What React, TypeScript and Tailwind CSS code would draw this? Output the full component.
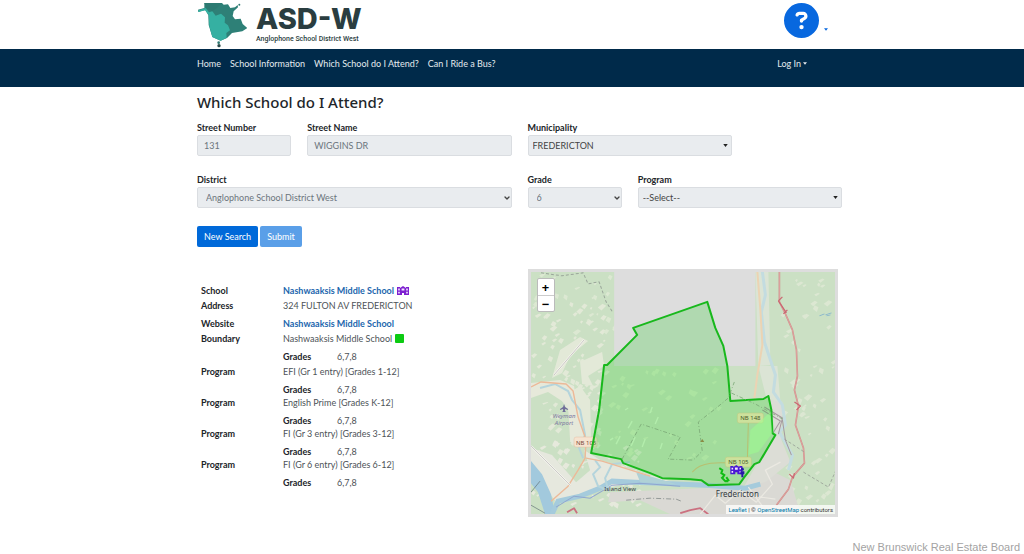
import React from "react";
import { FaCircleQuestion } from "react-icons/fa6";
import { ChevronDown } from "lucide-react";

const navLinks = [
  "Home",
  "School Information",
  "Which School do I Attend?",
  "Can I Ride a Bus?",
];

const programs = [
  "EFI (Gr 1 entry) [Grades 1-12]",
  "English Prime [Grades K-12]",
  "FI (Gr 3 entry) [Grades 3-12]",
  "FI (Gr 6 entry) [Grades 6-12]",
];

const fieldClass =
  "block h-[21px] w-full appearance-none rounded-[2px] border border-[#dadde1] bg-[#e9ecef] text-[9px] leading-[18px]";

// Outline of the school catchment area
const boundary =
  "M707 302 L633 328 L637 335 L607 365 L604 365 L599 410 L591 453 L621 459 L623 463 L650 473 L662 478 L690 479 L701 480 L708 485 L739 484 L744 477 L754 464 L759 462 L775 435 L772 433 L771 410 L768 396 L763 399 L730 401 L727 366 L723 346 L715 328 Z";

const highway =
  "M779 272 L779 302 L785 314 L792 330 L796 350 L797 376 L794 390 L798 406 L795 425 L803 448 L804 463 L792 477 L788 489 L776 505";

function Logo() {
  return (
    <svg viewBox="50 0 150 144" className="h-[48px] w-[50px]" aria-hidden="true">
      <path
        d="M72 9 L125 9 L130 14 L143 13 L150 24 L164 22 L172 15 L173 22 L160 34 L157 48 L164 58 L181 56 L187 72 L201 84 L186 94 L155 99 L140 114 L121 122 L96 111 L85 75 L84 46 L75 30 L54 36 L53 29 L72 24 Z"
        fill="#2e8077"
      />
      <path
        d="M54 31 L76 24 L86 37 L96 34 L106 47 L122 41 L134 52 L133 68 L143 76 L149 91 L138 99 L139 113 L121 122 L96 111 L87 78 L85 45 L74 31 L54 36 Z"
        fill="#35b0a2"
      />
      <path d="M72 9 L78 24 L96 34 L112 22 L125 9 Z" fill="#2c7a72" />
      <circle cx="115" cy="128" r="4" fill="#2c7770" />
      <circle cx="116" cy="137" r="5" fill="#2a4a4a" />
      <circle cx="177" cy="14" r="3" fill="#2c7770" />
    </svg>
  );
}

function SchoolShape() {
  return (
    <>
      <path d="M0 1 H3 V2 L6 0 L9 2 V1 H12 V9 H7 V7 H5 V9 H0 Z" fill="currentColor" />
      <path
        d="M1.2 2.6 h1.6 v1.8 h-1.6 z M1.2 5.8 h1.6 v1.8 h-1.6 z M9.2 2.6 h1.6 v1.8 h-1.6 z M9.2 5.8 h1.6 v1.8 h-1.6 z M4.6 2.4 h2.8 v2.2 h-2.8 z"
        fill="#f3e9ff"
      />
    </>
  );
}

function Caret({ className }: { className: string }) {
  return (
    <svg viewBox="0 0 6 4" className={className} aria-hidden="true">
      <path d="M0 0 H6 L3 4 Z" fill="currentColor" />
    </svg>
  );
}

interface SelectFieldProps {
  id: string;
  label: string;
  value: string;
  className: string;
  plain?: boolean;
}

function SelectField({ id, label, value, className, plain }: SelectFieldProps) {
  return (
    <div className={className}>
      <label htmlFor={id} className="block font-bold leading-[14px] text-[#212529]">
        {label}
      </label>
      <div className="relative">
        <select
          id={id}
          disabled={!plain}
          defaultValue={value}
          className={`${fieldClass} ${
            plain ? "px-1 text-[#444444]" : "px-2 text-[#6c757d] opacity-100"
          }`}
        >
          <option>{value}</option>
        </select>
        {plain ? (
          <Caret className="pointer-events-none absolute right-1 top-[9px] h-[3px] w-[5px] text-[#222222]" />
        ) : (
          <ChevronDown
            size={8}
            strokeWidth={4}
            className="pointer-events-none absolute right-px top-[7px] text-[#444444]"
          />
        )}
      </div>
    </div>
  );
}

interface TextFieldProps {
  id: string;
  label: string;
  value: string;
  className: string;
}

function TextField({ id, label, value, className }: TextFieldProps) {
  return (
    <div className={className}>
      <label htmlFor={id} className="block font-bold leading-[14px] text-[#212529]">
        {label}
      </label>
      <input
        id={id}
        type="text"
        readOnly
        defaultValue={value}
        className={`${fieldClass} px-[6px] text-[#6c757d]`}
      />
    </div>
  );
}

// Small clearings scattered over the woodland, same layout on every render
function scatter(count: number, seed: number, x: number, y: number, w: number, h: number) {
  let s = seed;
  const next = () => {
    s = (s * 16807) % 2147483647;
    return s / 2147483647;
  };
  let d = "";
  for (let i = 0; i < count; i++) {
    const px = x + next() * w;
    const py = y + next() * h;
    const a = 1 + next() * 4;
    const b = 1 + next() * 3;
    d += `M${px.toFixed(1)} ${py.toFixed(1)}l${a.toFixed(1)} ${(-b).toFixed(1)}l${b.toFixed(1)} ${(b / 2).toFixed(1)}l${(-a).toFixed(1)} ${(b + 1).toFixed(1)}z`;
  }
  return d;
}

function AreaMap() {
  return (
    <svg
      viewBox="531 272 304 242"
      preserveAspectRatio="xMidYMid slice"
      className="block h-[242px] w-full"
      role="img"
      aria-label="School boundary map"
    >
      <rect x="531" y="272" width="304" height="242" fill="#cbe0c4" />

      {/* clearings and farmland */}
      <path d={scatter(90, 71, 531, 305, 72, 150)} fill="#e2e9d7" />
      <path d={scatter(24, 19, 533, 275, 80, 60)} fill="#dce8d2" />
      <path d={scatter(60, 313, 780, 275, 52, 235)} fill="#dce7d2" />
      <path d={scatter(60, 97, 531, 440, 110, 70)} fill="#e6e9dc" />
      <path d={scatter(40, 41, 608, 370, 110, 90)} fill="#d8eaca" />
      <path
        d="M560 350 L580 337 L588 341 L570 356 L562 373 L552 378 Z M580 362 L602 352 L604 366 L588 376 L593 386 L582 384 Z M560 398 L580 386 L590 400 L591 440 L580 446 L574 420 Z"
        fill="#e3e9d8"
      />
      <path d="M531 383 L560 380 L574 386 L577 410 L588 445 L570 440 L568 405 L548 392 L531 398 Z" fill="#e6e9da" />
      <path d="M531 448 L552 455 L576 482 L590 470 L584 450 L600 460 L650 475 L680 484 L630 482 L600 490 L556 502 L546 488 L531 470 Z" fill="#e6e8de" />
      <path d="M610 492 L700 488 L745 487 L770 470 L790 480 L800 514 L670 514 L640 500 L608 502 Z" fill="#dad9d4" />
      <path d="M768 398 L782 402 L781 440 L790 462 L765 482 L744 486 L756 465 L776 436 Z" fill="#dcddd6" />
      <path d="M755 272 L768 272 L770 365 L758 366 Z M758 366 L777 366 L780 402 L766 398 Z" fill="#dbe4d5" />

      {/* water */}
      <path d="M531 461 L542 474 L551 494 L555 514 L545 514 L538 492 L531 483 Z" fill="#a2c9dd" />
      <path
        d="M552 514 L558 501 L580 496 L600 488 L612 481 L635 482 L660 483 L682 484 L706 485 L745 488 L760 484"
        fill="none"
        stroke="#a5cbdc"
        strokeWidth="5"
      />
      <path
        d="M556 507 L574 496 L590 498 L612 485 L640 483 L680 486"
        fill="none"
        stroke="#8fa6cf"
        strokeWidth="1"
      />
      <path d="M636 472 L660 479 L676 484 L640 482 Z" fill="#afd1d6" />
      <path
        d="M762 272 L765 295 L761 312 L764 342 L770 360 L775 375 L773 392 L782 405 L785 425 L779 432 L792 455 L788 470"
        fill="none"
        stroke="#c3dce0"
        strokeWidth="3"
      />
      <path
        d="M540 388 L555 384 L568 391 L572 400 L580 410 L585 435 L579 448 L583 458 M595 460 L600 467 L593 474 L598 486 L608 490 L605 478 L612 464 L630 462"
        fill="none"
        stroke="#b4d4dc"
        strokeWidth="2"
      />

      {/* roads */}
      <g fill="none" strokeLinejoin="round">
        <path
          d="M531 387 L541 382 L566 384 L573 391 L578 417 L586 440 L585 458 L578 470 L568 486 L551 501 M586 458 L602 461 L650 476"
          stroke="#ecb998"
          strokeWidth="1.4"
        />
        <path d="M757 272 L760 310 L762 345 L757 375 L754 398" stroke="#ecd3b3" strokeWidth="2" />
        <path d="M748 422 L747 460 M692 472 C700 462 715 461 746 464" stroke="#e6bd8c" strokeWidth="1" />
        <path d="M531 446 L570 485 M554 375 L584 340" stroke="#f7f6f0" strokeWidth="2" />
        <path d="M531 446 L570 485 M554 375 L584 340" stroke="#bdbcb9" strokeWidth="0.8" />
        <path d="M531 505 L545 513 M531 492 L540 481" stroke="#66777a" strokeWidth="0.7" />
        <path d={highway} stroke="#d08a88" strokeWidth="1.6" />
        <path d={highway} stroke="#e8b9b2" strokeWidth="0.5" />
        <path d="M778 301 l4 -4 m-4 4 l8 12 m-3 1 l4 -4 M794 402 l6 4 l-4 4 M789 474 l4 4 l1 -5" stroke="#ca6671" strokeWidth="1.2" />
        <path d="M680 513 L690 510 L700 508 L708 514 M567 512 L574 508 L577 513" stroke="#cb7180" strokeWidth="1.8" />
        <path
          d="M700 514 L715 495 L725 503 L740 490 L756 502 L772 484 L765 470 L780 462 M748 487 L762 506 M726 492 L775 499"
          stroke="#ebe9e2"
          strokeWidth="1.2"
        />
        <path
          d="M541 273 L562 276 L583 273 L588 284 L599 282 L606 302 L613 313"
          stroke="#9aa69a"
          strokeWidth="1"
          strokeDasharray="3 2"
        />
        <path
          d="M784 439 L804 452 M803 472 L828 487 L835 471"
          stroke="#969d95"
          strokeWidth="0.8"
          strokeDasharray="3 2"
        />
        <path d="M626 500 L650 498 L676 499 L681 501" stroke="#828a88" strokeWidth="0.8" strokeDasharray="5 2 1 2" />
        <path d="M762 410 L780 421 L772 434 M764 407 L782 418 L778 434 M782 420 L785 440 L791 455" stroke="#a5999f" strokeWidth="1" />
      </g>
      <path d="M819 316 l5 -2 m1 1 l6 -2 m-5 3 l4 -1" stroke="#87b5cd" strokeWidth="1" />

      {/* place and road labels */}
      <g fontFamily="'Noto Sans', sans-serif" textAnchor="middle">
        <rect x="574" y="437" width="23" height="10" rx="2" fill="#f6e3d0" stroke="#e2bfa4" strokeWidth="0.5" />
        <text x="586" y="445" fontSize="6" fill="#7a4a3a">NB 105</text>
        <rect x="737" y="413" width="26" height="10" rx="2" fill="#ffe6c4" stroke="#eec79c" strokeWidth="0.5" />
        <text x="750" y="420" fontSize="6" fill="#5a3a30">NB 148</text>
        <rect x="725" y="457" width="26" height="10" rx="2" fill="#ffe6c4" stroke="#eec79c" strokeWidth="0.5" />
        <text x="738" y="464" fontSize="6" fill="#5a3a30">NB 105</text>
        <g fontSize="6" fill="#7c779f" fontStyle="italic">
          <text x="564" y="418">Weyman</text>
          <text x="564" y="425">Airport</text>
        </g>
        <path d="M564 404 l1 3 l3 2 v1 l-3 -1 v2 l1 1 h-4 l1 -1 v-2 l-3 1 v-1 l3 -2 z" fill="#716e9a" />
        <text x="620" y="491" fontSize="6" fill="#343b42">
          Island View
        </text>
        <text x="737" y="497" fontSize="8" fill="#343b42">
          Fredericton
        </text>
      </g>

      {/* tiles without data */}
      <rect x="614" y="272" width="141" height="94" fill="#dddddd" />

      {/* catchment area */}
      <path d={boundary} fill="#00cc00" fillOpacity="0.2" stroke="#18b81c" strokeWidth="2" strokeLinejoin="round" />
      <path d="M750 430 L770 412 L772 433 L758 452 L748 455 Z" fill="#9cff8e" fillOpacity="0.5" />
      <g fill="none" stroke="#7aa875" strokeWidth="0.8" strokeDasharray="4 2 1 2">
        <path d="M622 459 L641 424 L680 437 L668 459 L693 460 L702 451 L698 422 L716 408 L728 398 L734 382" />
        <path d="M731 393 L755 404 L782 419" />
      </g>
      <path
        d="M616 444 l4 -8 M628 428 l4 -7 M650 413 l2 -6 M655 424 l3 -7 M631 446 l4 -9 M642 447 l3 -8 M660 449 l2 -6 M610 440 l3 -2 M625 410 l3 -2"
        stroke="#b3edac"
        strokeWidth="1.4"
      />
      <path
        d="M719 468 l3 2 l-1 3 l3 2 l-2 3 l3 3 l3 -1 l-2 -3 M721 477 l4 4 l3 0"
        fill="none"
        stroke="#11bd16"
        strokeWidth="2"
      />
      <path d="M700 442 l2 -3 l2 3 z" fill="#8a8b44" />

      {/* school and home markers */}
      <g transform="translate(730 465)" className="text-[#4a17d6]">
        <SchoolShape />
      </g>
      <g fill="#2616a8">
        <circle cx="742" cy="469" r="1.5" />
        <path d="M740 471 h4 v3 h-1 v3 h-2 v-3 h-1 z" />
      </g>
    </svg>
  );
}

function Row({ label, children }: { label: string; children: React.ReactNode }) {
  return (
    <div className="flex h-[13px] items-center">
      <dt className="w-[82px] shrink-0 font-bold text-[#212529]">{label}</dt>
      <dd className="flex items-center gap-[3px]">{children}</dd>
    </div>
  );
}

function GradesRow() {
  return (
    <div className="flex h-[13px] items-center pl-[82px]">
      <dt className="w-[54px] shrink-0 font-bold text-[#212529]">Grades</dt>
      <dd>6,7,8</dd>
    </div>
  );
}

export default function App() {
  return (
    <div className="bg-white font-['Lato',sans-serif] text-[9px] leading-[13px] text-[#4d5358]">
      {/* 상단 로고 */}
      <header className="mx-auto flex h-[49px] max-w-[660px] justify-between pl-[15px]">
        <a href="#" className="flex gap-[9px]">
          <Logo />
          <span className="flex flex-col pt-[6px] text-[#2a3d40]">
            <span className="font-['Inter',sans-serif] text-[29px] font-extrabold leading-[26px]">ASD-W</span>
            <span className="font-['Roboto',sans-serif] text-[7px] font-medium leading-[14px]">
              Anglophone School District West
            </span>
          </span>
        </a>
        <button type="button" aria-label="Help" className="flex items-start gap-[5px] pr-[14px] pt-[3px] text-[#0868df]">
          <FaCircleQuestion size={35} />
          <Caret className="mt-[25px] h-[3px] w-[4px]" />
        </button>
      </header>

      {/* 메뉴 */}
      <nav className="h-[38px] bg-[#002a4a] text-[#e4eaef]">
        <div className="mx-auto flex max-w-[660px] justify-between pl-[15px] pr-[35px] pt-[8px]">
          <div className="flex gap-[9px]">
            {navLinks.map((link) => (
              <a key={link} href="#">
                {link}
              </a>
            ))}
          </div>
          <button type="button" className="flex items-center gap-[2px]">
            Log In
            <Caret className="h-[3px] w-[4px]" />
          </button>
        </div>
      </nav>

      <main className="mx-auto max-w-[660px] pl-[15px] pt-[6px]">
        <h1 className="font-['Noto_Sans',sans-serif] text-[15px] font-medium leading-[18px] text-[#212529]">
          Which School do I Attend?
        </h1>

        {/* 검색 조건 */}
        <form onSubmit={(e) => e.preventDefault()}>
          <div className="mt-[10px] grid grid-cols-12 gap-x-4 gap-y-[17px]">
            <TextField id="street-number" label="Street Number" value="131" className="col-span-2" />
            <TextField id="street-name" label="Street Name" value="WIGGINS DR" className="col-span-4" />
            <SelectField id="municipality" label="Municipality" value="FREDERICTON" className="col-span-4" plain />
            <SelectField
              id="district"
              label="District"
              value="Anglophone School District West"
              className="col-span-6"
            />
            <SelectField id="grade" label="Grade" value="6" className="col-span-2" />
            <SelectField id="program" label="Program" value="--Select--" className="col-span-4" plain />
          </div>

          <div className="mt-[18px] flex gap-[2px] text-white">
            <button type="button" className="h-[21px] rounded-[2px] bg-[#0069d9] px-[7px]">
              New Search
            </button>
            <button type="submit" disabled className="h-[21px] rounded-[2px] bg-[#5a9fe8] px-[7px]">
              Submit
            </button>
          </div>
        </form>

        {/* 검색 결과 */}
        <div className="mt-[22px] grid grid-cols-2 gap-x-4">
          <dl className="flex flex-col gap-[5px] pl-1 pt-[15px]">
            <div className="flex flex-col gap-[2px]">
              <Row label="School">
                <a href="#" className="font-bold text-[#1c66ad]">
                  Nashwaaksis Middle School
                </a>
                <svg viewBox="0 0 12 9" className="h-[9px] w-[12px] text-[#7d1fd0]" aria-hidden="true">
                  <SchoolShape />
                </svg>
              </Row>
              <Row label="Address">324 FULTON AV FREDERICTON</Row>
            </div>
            <div className="flex flex-col gap-[2px]">
              <Row label="Website">
                <a href="#" className="font-bold text-[#1c66ad]">
                  Nashwaaksis Middle School
                </a>
              </Row>
              <Row label="Boundary">
                Nashwaaksis Middle School
                <span className="size-[9px] rounded-[1px] bg-[#0ccb12]" />
              </Row>
            </div>
            {programs.map((program, i) => (
              <div key={program} className={i === 0 ? "flex flex-col gap-[2px]" : "flex flex-col"}>
                <GradesRow />
                <Row label="Program">{program}</Row>
              </div>
            ))}
            <GradesRow />
          </dl>

          {/* 지도 */}
          <div className="relative mr-1 self-start border-3 border-[#dddddd]">
            <AreaMap />
            <div className="absolute left-[6px] top-[6px] flex flex-col rounded-[2px] border border-[#bbbbbb] bg-white font-['Open_Sans',sans-serif] text-[13px] font-bold leading-[16px] text-black">
              <button type="button" aria-label="Zoom in" className="h-[17px] w-[16px] border-b border-[#cccccc]">
                +
              </button>
              <button type="button" aria-label="Zoom out" className="h-[15px] w-[16px]">
                −
              </button>
            </div>
            <div className="absolute bottom-0 right-0 bg-white/75 px-[2px] font-['Roboto',sans-serif] text-[6px] leading-[9px] text-[#333333]">
              <a href="#" className="text-[#0078a8]">
                Leaflet
              </a>{" "}
              | ©{" "}
              <a href="#" className="text-[#0078a8]">
                OpenStreetMap
              </a>{" "}
              contributors
            </div>
          </div>
        </div>
      </main>

      <footer className="mt-[24px] pr-1 text-right font-['Liberation_Sans',sans-serif] text-[11px] leading-[13px] text-[#a3a3a3]">
        New Brunswick Real Estate Board
      </footer>
    </div>
  );
}
